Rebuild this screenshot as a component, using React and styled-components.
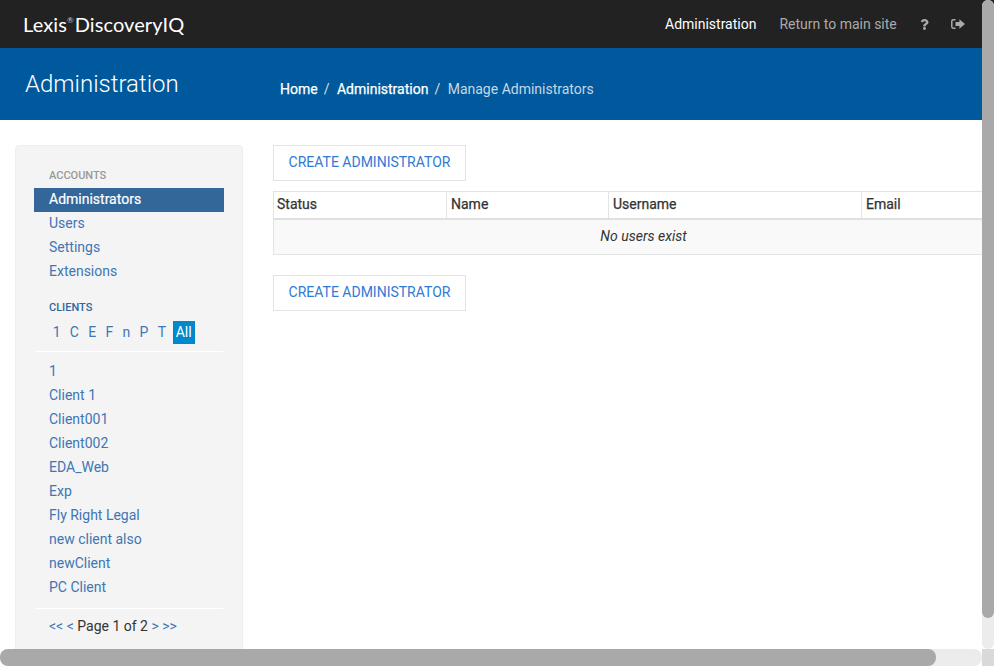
import React from "react";
import styled, { createGlobalStyle } from "styled-components";
import { FaQuestion } from "react-icons/fa";

const GlobalStyle = createGlobalStyle`
	html, body {
		margin: 0;
		padding: 0;
		background: #fff;
		overflow: hidden;
		height: 100%;
	}
	body {
		font-family: Roboto, "Liberation Sans", sans-serif;
		font-size: 14px;
		line-height: 24px;
		color: #333;
	}
`;

const Page = styled.div`
	width: 1030px;
	height: 681px;
`;

const TopBar = styled.header`
	height: 48px;
	background: #222;
	display: flex;
	align-items: center;
	padding: 0 0 0 23px;
`;

const Logo = styled.div`
	font-family: Lato, sans-serif;
	font-size: 20px;
	letter-spacing: 0.1px;
	color: #fff;
	display: flex;
	align-items: center;
	sup {
		font-size: 8px;
		line-height: 8px;
		margin: -9px 1px 0 0;
		align-self: center;
		color: #ccc;
	}
`;

const TopNav = styled.nav`
	width: 317px;
	margin-left: auto;
	margin-right: 48px;
	display: flex;
	align-items: center;
`;

const TopLink = styled.a`
	color: ${({ $active }) => ($active ? "#fff" : "#aaa")};
	margin-right: ${({ $gap }) => $gap}px;
	white-space: nowrap;
`;

const TopIcon = styled.span`
	color: #aaa;
	display: flex;
	margin-right: ${({ $gap }) => $gap || 0}px;
	font-size: ${({ $size }) => $size}px;
`;

const TitleBar = styled.div`
	height: 72px;
	background: #00599d;
	display: flex;
	align-items: center;
	padding-left: 25px;
`;

const Title = styled.h1`
	margin: 0;
	width: 255px;
	font-size: 24px;
	font-weight: 300;
	line-height: 72px;
	color: #fff;
`;

const Crumbs = styled.div`
	display: flex;
	margin-top: 10px;
`;

const Crumb = styled.a`
	color: ${({ $current }) => ($current ? "#c8d6e5" : "#fff")};
	-webkit-text-stroke: ${({ $current }) => ($current ? "0" : "0.25px")};
`;

const Slash = styled.span`
	color: #ddd;
	margin: 0 7.5px 0 6px;
`;

const Body = styled.div`
	display: flex;
	align-items: flex-start;
	padding: 25px 17px 0 15px;
`;

const Sidebar = styled.aside`
	width: 228px;
	box-sizing: border-box;
	height: 536px;
	background: #f4f4f4;
	border: 1px solid #eee;
	border-radius: 4px;
	padding: 18px 18px 0;
	margin-right: 30px;
	flex-shrink: 0;
`;

const SectionLabel = styled.div`
	font-size: 11px;
	font-weight: 500;
	line-height: 24px;
	padding-left: 15px;
	text-transform: uppercase;
	color: ${({ $strong }) => ($strong ? "#336699" : "#999")};
	margin-top: ${({ $top }) => $top || 0}px;
`;

const SideLink = styled.a`
	display: block;
	height: 24px;
	line-height: 23px;
	padding-left: 15px;
	color: ${({ $active }) => ($active ? "#fff" : "#3f76b3")};
	background: ${({ $active }) => ($active ? "#336699" : "none")};
	-webkit-text-stroke: ${({ $active }) => ($active ? "0.2px" : "0")};
`;

const Letters = styled.div`
	display: flex;
	align-items: center;
	height: 24px;
	padding-left: 14px;
	margin-bottom: 7px;
`;

const Letter = styled.a`
	color: ${({ $active }) => ($active ? "#fff" : "#3f76b3")};
	background: ${({ $active }) => ($active ? "#0088cc" : "none")};
	padding: ${({ $active }) => ($active ? "0 3px" : "0 4.65px")};
	margin-left: ${({ $active }) => ($active ? 2 : 0)}px;
	height: 23px;
	line-height: 23px;
`;

const Rule = styled.hr`
	border: 0;
	border-top: 1px solid #fff;
	margin: ${({ $space }) => $space};
`;

const Pager = styled.div`
	padding-left: 15px;
	line-height: 23px;
	color: #333;
	a {
		color: #3f76b3;
	}
`;

const Main = styled.main`
	flex: 1;
	min-width: 0;
`;

const ActionButton = styled.a`
	display: inline-block;
	box-sizing: border-box;
	width: 193px;
	height: 36px;
	line-height: 33px;
	text-align: center;
	border: 1px solid #e3e3e3;
	color: #2f7ad6;
	background: #fff;
	vertical-align: top;
`;

const ButtonRow = styled.div`
	height: 36px;
	margin-bottom: ${({ $bottom }) => $bottom}px;
`;

const Table = styled.table`
	width: 740px;
	table-layout: fixed;
	border-collapse: collapse;
	border: 1px solid #e3e3e3;
	margin-bottom: 20px;
`;

const HeadCell = styled.th`
	width: ${({ $w }) => $w}px;
	box-sizing: border-box;
	height: 27px;
	padding: 0 4px;
	vertical-align: top;
	text-align: left;
	font-weight: 400;
	-webkit-text-stroke: 0.25px;
	font-size: 14px;
	line-height: 24px;
	color: #333;
	border-left: 1px solid #e3e3e3;
	border-bottom: 2px solid #e0e0e0;
	&:first-child {
		padding-left: 3px;
	}
`;

const EmptyCell = styled.td`
	height: 32px;
	padding: 0 0 2px;
	text-align: center;
	font-style: italic;
	background: #f9f9f9;
`;

const VerticalTrack = styled.div`
	position: fixed;
	top: 0;
	right: 0;
	width: 12px;
	height: 649px;
	background: #ececec;
	border-radius: 6px;
`;

const VerticalThumb = styled.div`
	height: 618px;
	background: #a9a9a9;
	border-radius: 6px;
`;

const HorizontalTrack = styled.div`
	position: fixed;
	left: 0;
	bottom: 0;
	width: 982px;
	height: 17px;
	background: #ececec;
	border-radius: 8px;
`;

const HorizontalThumb = styled.div`
	width: 936px;
	height: 17px;
	background: #a9a9a9;
	border-radius: 8px;
`;

const ScrollCorner = styled.div`
	position: fixed;
	right: 0;
	bottom: 0;
	width: 12px;
	height: 17px;
	background: #d9d9d9;
`;

const SignOutIcon = () => (
	<svg width="14" height="10" viewBox="0 0 14 10">
		<path
			d="M4.5 .8H2.2C1.4 .8 .8 1.4 .8 2.2v5.6c0 .8.6 1.4 1.4 1.4h2.3"
			fill="none"
			stroke="currentColor"
			strokeWidth="1.5"
		/>
		<path d="M4.5 3h3.9V.2L14 5 8.4 9.8V7H4.5z" fill="currentColor" />
	</svg>
);

const accounts = ["Users", "Settings", "Extensions"];
const letters = ["1", "C", "E", "F", "n", "P", "T"];
const clients = [
	"1",
	"Client 1",
	"Client001",
	"Client002",
	"EDA_Web",
	"Exp",
	"Fly Right Legal",
	"new client also",
	"newClient",
	"PC Client"
];
const columns = [
	["Status", 173],
	["Name", 162],
	["Username", 253],
	["Email", 152]
];

const App = () => (
	<Page>
		<GlobalStyle />
		<TopBar>
			<Logo>
				Lexis<sup>®</sup>DiscoveryIQ
			</Logo>
			<TopNav>
				<TopLink $active $gap={23}>
					Administration
				</TopLink>
				<TopLink $gap={22}>Return to main site</TopLink>
				<TopIcon $gap={21} $size={11}>
					<FaQuestion />
				</TopIcon>
				<TopIcon>
					<SignOutIcon />
				</TopIcon>
			</TopNav>
		</TopBar>
		<TitleBar>
			<Title>Administration</Title>
			<Crumbs>
				<Crumb>Home</Crumb>
				<Slash>/</Slash>
				<Crumb>Administration</Crumb>
				<Slash>/</Slash>
				<Crumb $current>Manage Administrators</Crumb>
			</Crumbs>
		</TitleBar>
		<Body>
			<Sidebar>
				<SectionLabel>Accounts</SectionLabel>
				<SideLink $active>Administrators</SideLink>
				{accounts.map((name) => (
					<SideLink key={name}>{name}</SideLink>
				))}
				<SectionLabel $strong $top={12}>
					Clients
				</SectionLabel>
				<Letters>
					{letters.map((l) => (
						<Letter key={l}>{l}</Letter>
					))}
					<Letter $active>All</Letter>
				</Letters>
				<Rule $space="0 1px 8px" />
				{clients.map((name) => (
					<SideLink key={name}>{name}</SideLink>
				))}
				<Rule $space="8px 1px 6px" />
				<Pager>
					<a>&lt;&lt; &lt;</a> Page 1 of 2 <a>&gt; &gt;&gt;</a>
				</Pager>
			</Sidebar>
			<Main>
				<ButtonRow $bottom={10}>
					<ActionButton>CREATE ADMINISTRATOR</ActionButton>
				</ButtonRow>
				<Table>
					<thead>
						<tr>
							{columns.map(([label, w]) => (
								<HeadCell key={label} $w={w}>
									{label}
								</HeadCell>
							))}
						</tr>
					</thead>
					<tbody>
						<tr>
							<EmptyCell colSpan={4}>No users exist</EmptyCell>
						</tr>
					</tbody>
				</Table>
				<ButtonRow $bottom={0}>
					<ActionButton>CREATE ADMINISTRATOR</ActionButton>
				</ButtonRow>
			</Main>
		</Body>
		<VerticalTrack>
			<VerticalThumb />
		</VerticalTrack>
		<HorizontalTrack>
			<HorizontalThumb />
		</HorizontalTrack>
		<ScrollCorner />
	</Page>
);

export default App;
